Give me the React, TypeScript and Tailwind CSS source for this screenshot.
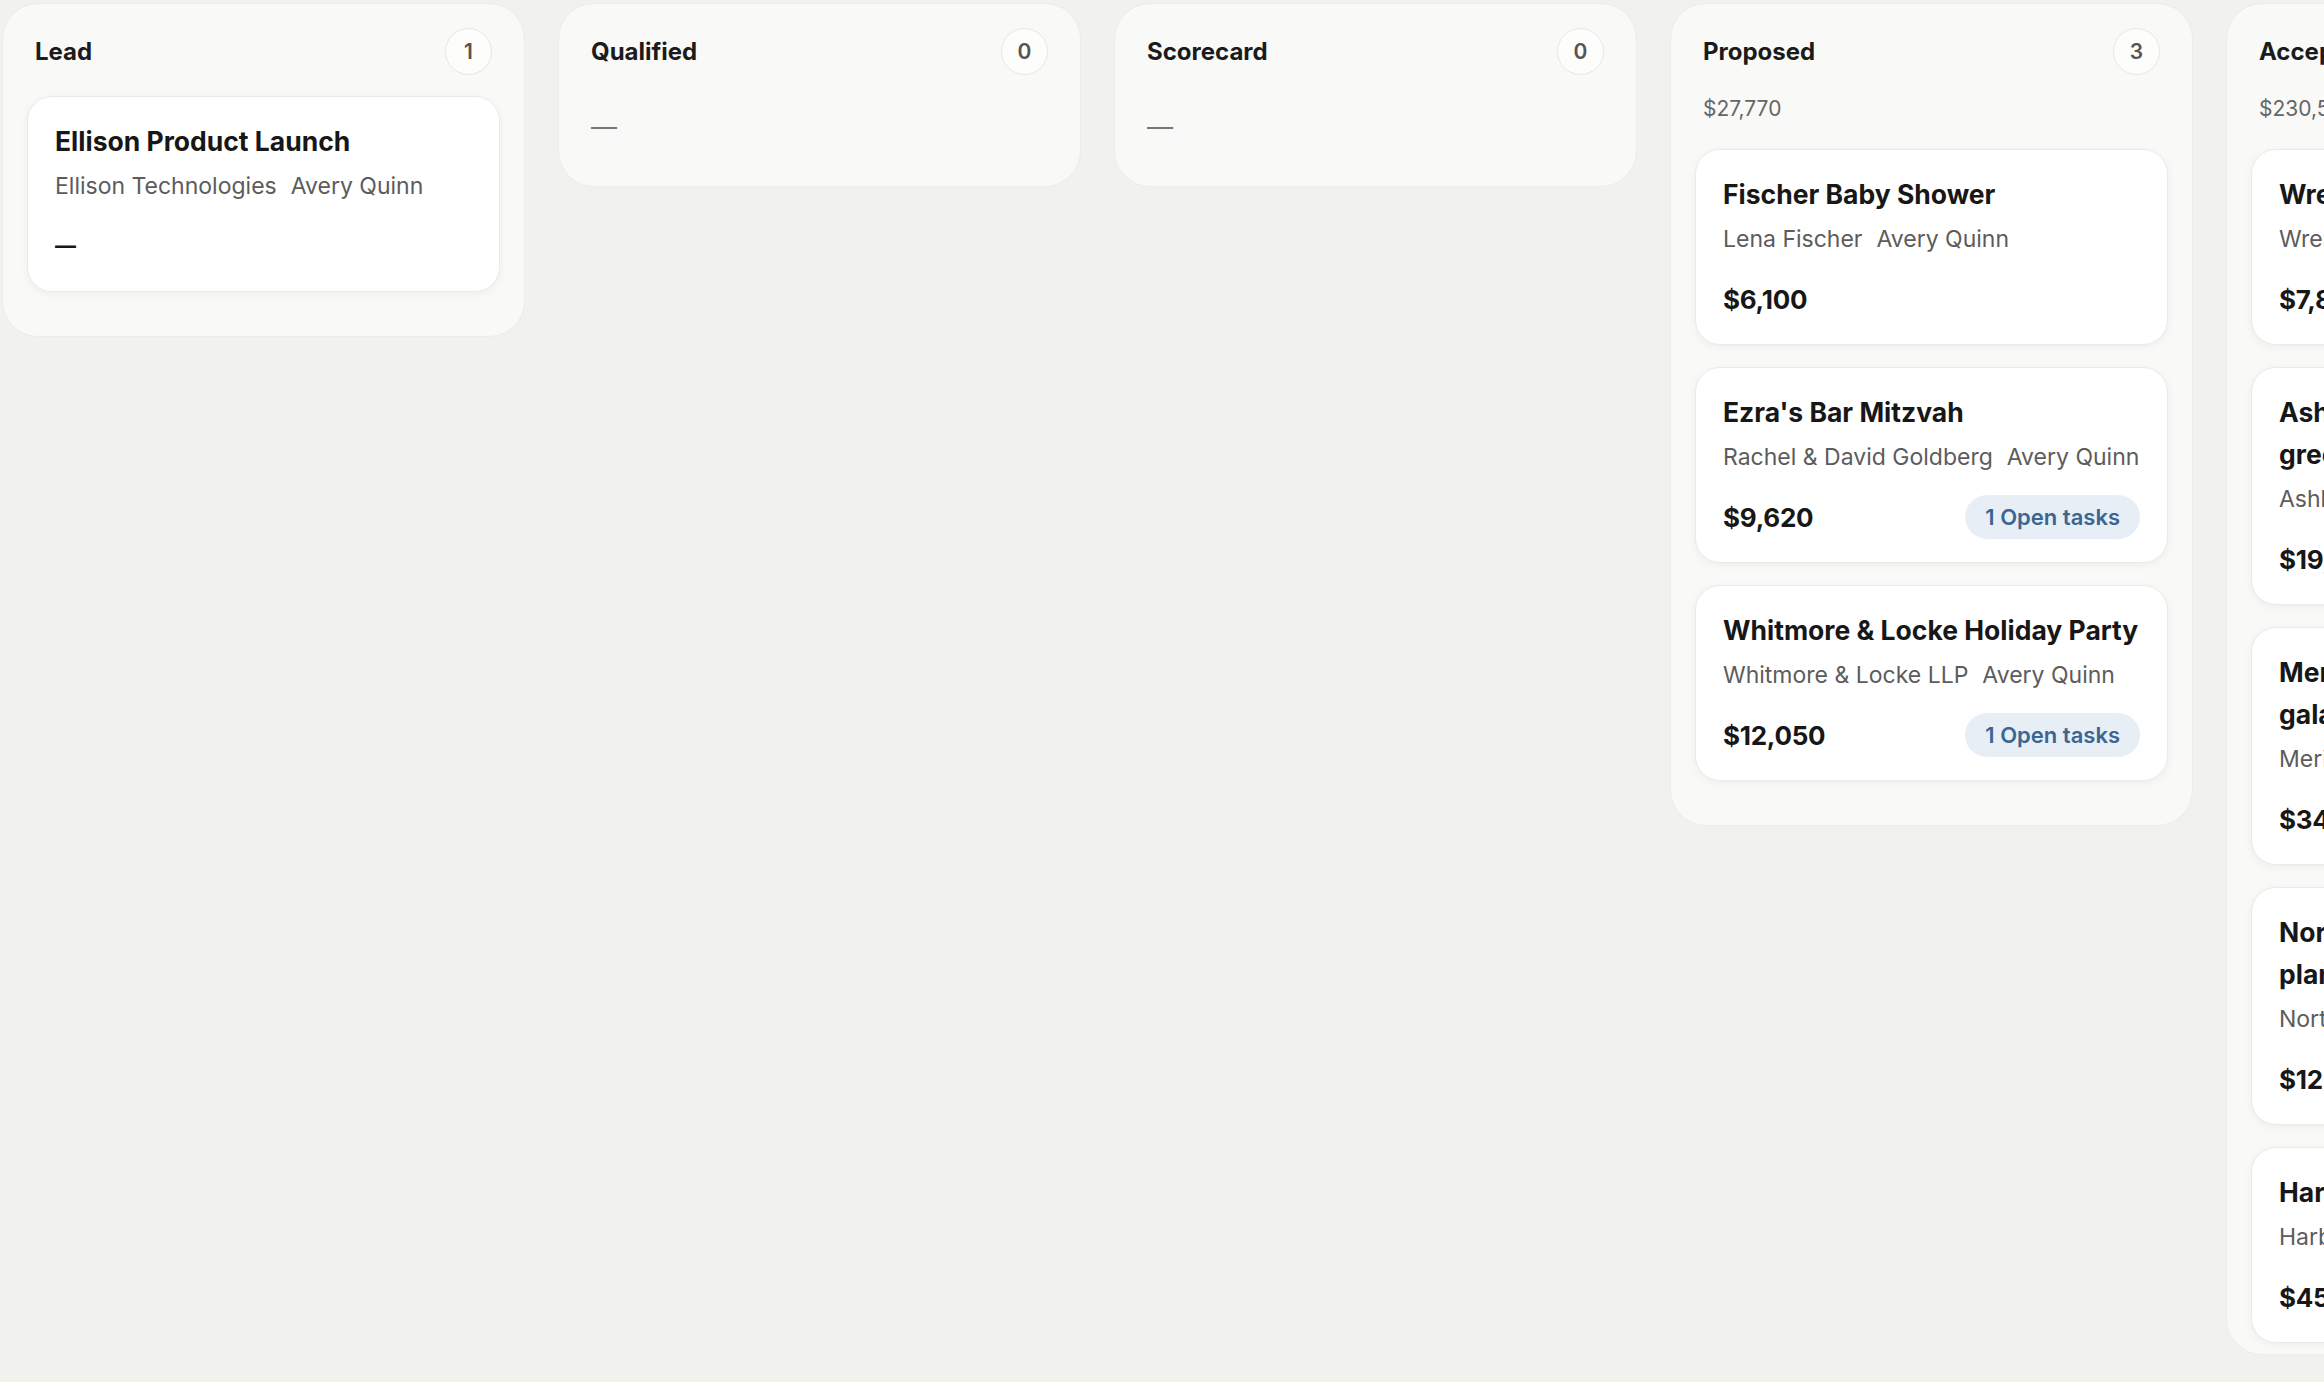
import React from "react";

type Deal = {
  title: string;
  client: string;
  owner: string;
  amount: string;
  openTasks?: number;
};

type Stage = {
  name: string;
  count: number;
  total?: string;
  deals: Deal[];
};

const stages: Stage[] = [
  {
    name: "Lead",
    count: 1,
    deals: [
      { title: "Ellison Product Launch", client: "Ellison Technologies", owner: "Avery Quinn", amount: "" },
    ],
  },
  { name: "Qualified", count: 0, deals: [] },
  { name: "Scorecard", count: 0, deals: [] },
  {
    name: "Proposed",
    count: 3,
    total: "$27,770",
    deals: [
      { title: "Fischer Baby Shower", client: "Lena Fischer", owner: "Avery Quinn", amount: "$6,100" },
      { title: "Ezra's Bar Mitzvah", client: "Rachel & David Goldberg", owner: "Avery Quinn", amount: "$9,620", openTasks: 1 },
      { title: "Whitmore & Locke Holiday Party", client: "Whitmore & Locke LLP", owner: "Avery Quinn", amount: "$12,050", openTasks: 1 },
    ],
  },
  {
    name: "Accepted",
    count: 5,
    total: "$230,550",
    deals: [
      { title: "Wrenfield Wedding", client: "Wrenfield Family", owner: "Avery Quinn", amount: "$7,850" },
      { title: "Ashbury Partners Annual greenhouse dinner", client: "Ashbury Partners", owner: "Avery Quinn", amount: "$19,400" },
      { title: "Meridian Museum Benefactors gala", client: "Meridian Museum", owner: "Avery Quinn", amount: "$34,200" },
      { title: "Northwind Leadership Summit planning", client: "Northwind Group", owner: "Avery Quinn", amount: "$12,900" },
      { title: "Harbor View Retreat", client: "Harborview Capital", owner: "Avery Quinn", amount: "$45,000" },
    ],
  },
];

function DealCard({ deal }: { deal: Deal }) {
  return (
    <div className="shrink-0 rounded-[25px] border border-[#eaeae6] bg-white px-[27px] pt-[23px] pb-[23px] shadow-[0_2px_8px_rgba(0,0,0,0.05)]">
      <p className="text-[26.5px] font-bold leading-[42px] text-[#171717]">{deal.title}</p>
      <div className="mt-2 flex gap-[14px] whitespace-nowrap text-[23px] leading-[32px] text-[#5c5c5c]">
        <span>{deal.client}</span>
        <span>{deal.owner}</span>
      </div>
      <div className="mt-[22px] flex h-[44px] items-center justify-between">
        {deal.amount ? (
          <span className="text-[26px] font-bold tracking-[-0.01em] text-[#171717]">{deal.amount}</span>
        ) : (
          <span className="text-[21px] font-bold text-[#171717]">—</span>
        )}
        {deal.openTasks ? (
          <span className="flex h-[44px] items-center rounded-full bg-[#e8eef6] px-5 text-[22px] font-semibold text-[#3b6593]">
            {deal.openTasks} Open tasks
          </span>
        ) : null}
      </div>
    </div>
  );
}

function StageColumn({ stage }: { stage: Stage }) {
  return (
    <section className="flex max-h-[1352px] w-[523px] shrink-0 flex-col overflow-hidden rounded-[36px] border border-[#ecece8] bg-[#f9f9f7] px-6 pt-6 pb-[44px]">
      <header className="flex h-[47px] shrink-0 items-center justify-between px-[8px]">
        <h2 className="text-[24px] font-bold text-[#1b1b1b]">{stage.name}</h2>
        <span className="flex h-[47px] min-w-[47px] items-center justify-center rounded-full border border-[#e6e6e2] bg-[#fdfdfc] text-[21px] font-semibold text-[#555]">
          {stage.count}
        </span>
      </header>
      {stage.total && (
        <p className="mt-[21px] px-[8px] text-[21px] leading-[26px] text-[#666]">{stage.total}</p>
      )}
      {stage.deals.length === 0 ? (
        <p className="mt-[21px] px-[8px] pt-4 text-[26px] leading-[30px] text-[#777]">—</p>
      ) : (
        <div className={stage.total ? "mt-[27px] flex flex-col gap-[22px]" : "mt-[21px] flex flex-col gap-[22px]"}>
          {stage.deals.map((deal) => (
            <DealCard key={deal.title} deal={deal} />
          ))}
        </div>
      )}
    </section>
  );
}

export default function App() {
  return (
    <div
      className="h-screen w-screen overflow-hidden bg-[#f1f1ed]"
      style={{ fontFamily: "Inter, 'Noto Sans', sans-serif" }}
    >
      <div className="flex items-start gap-[33px] pl-[2px] pt-[3px]">
        {stages.map((stage) => (
          <StageColumn key={stage.name} stage={stage} />
        ))}
      </div>
    </div>
  );
}
